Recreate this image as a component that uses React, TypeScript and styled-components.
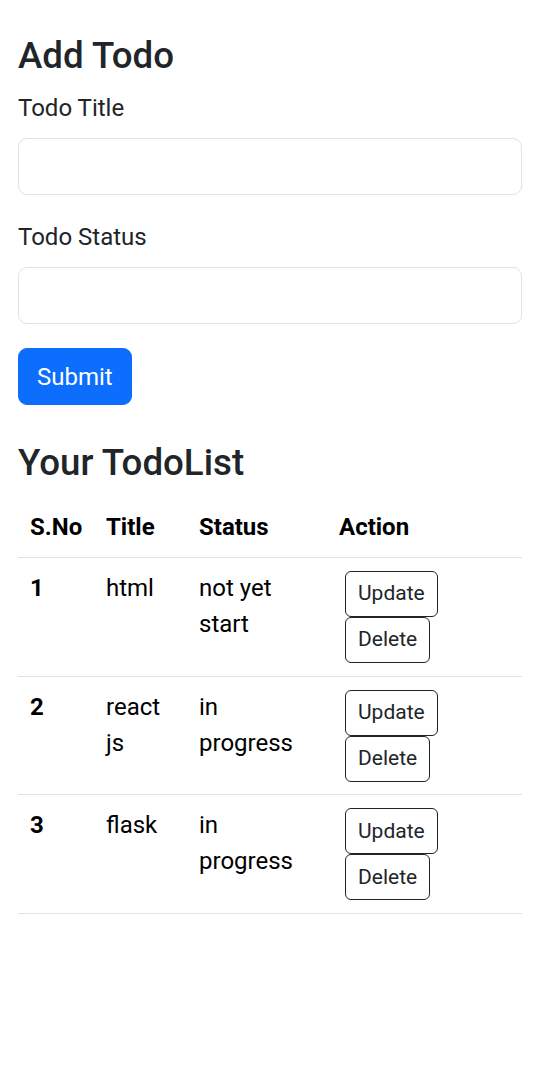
import React from "react";
import styled, { createGlobalStyle } from "styled-components";

const Global = createGlobalStyle`
  * { box-sizing: border-box; }
  body {
    margin: 0;
    background: #fff;
    font-family: Roboto, "Liberation Sans", Arial, sans-serif;
    color: #212529;
    font-size: 24px;
    line-height: 1.5;
  }
`;

const Page = styled.div`
  padding: 34px 18px 0;
`;

const Heading = styled.h2<{ $top?: number }>`
  font-size: 36.7px;
  font-weight: 500;
  line-height: 1.2;
  margin: ${(p) => p.$top ?? 0}px 0 12px;
  color: #212529;
`;

const Field = styled.div`
  margin-bottom: 24px;
`;

const Label = styled.label`
  display: block;
  font-size: 24px;
  line-height: 36px;
  margin-bottom: 12px;
`;

const Input = styled.input`
  display: block;
  width: 100%;
  height: 57px;
  padding: 9px 18px;
  font-size: 24px;
  font-family: inherit;
  border: 1.5px solid #dee2e6;
  border-radius: 9px;
  background: #fff;
  outline: none;
`;

const SubmitButton = styled.button`
  display: inline-block;
  height: 57px;
  padding: 9px 18px;
  font-family: inherit;
  font-size: 24px;
  line-height: 36px;
  color: #fff;
  background: #0d6efd;
  border: 1.5px solid #0d6efd;
  border-radius: 9px;
`;

const Table = styled.table`
  width: 100%;
  border-collapse: collapse;
  table-layout: fixed;
  color: #000;
  vertical-align: top;
`;

const Row = styled.tr`
  border-bottom: 1.5px solid #dee2e6;
`;

const Th = styled.th`
  text-align: left;
  font-weight: 700;
  padding: 12px;
  line-height: 36px;
  vertical-align: top;
`;

const Td = styled.td<{ $bold?: boolean }>`
  padding: 12px;
  line-height: 36px;
  vertical-align: top;
  font-weight: ${(p) => (p.$bold ? 700 : 400)};
`;

const Actions = styled.div`
  display: flex;
  flex-wrap: wrap;
  align-items: flex-start;
  padding: 1px 0 0.7px;
`;

const SmallButton = styled.button`
  display: inline-block;
  margin: 0 6px;
  height: 46px;
  padding: 6px 12px;
  font-family: inherit;
  font-size: 21px;
  line-height: 31.5px;
  color: #212529;
  background: #fff;
  border: 1.5px solid #212529;
  border-radius: 6px;
`;

const todos = [
  { id: 1, title: "html", status: "not yet start" },
  { id: 2, title: "react js", status: "in progress" },
  { id: 3, title: "flask", status: "in progress" },
];

export default function App() {
  return (
    <>
      <Global />
      <Page>
        <Heading>Add Todo</Heading>
        <Field>
          <Label>Todo Title</Label>
          <Input type="text" />
        </Field>
        <Field>
          <Label>Todo Status</Label>
          <Input type="text" />
        </Field>
        <SubmitButton>Submit</SubmitButton>
        <Heading $top={36}>Your TodoList</Heading>
        <Table>
          <colgroup>
            <col style={{ width: 76 }} />
            <col style={{ width: 93 }} />
            <col style={{ width: 140 }} />
            <col />
          </colgroup>
          <thead>
            <Row>
              <Th>S.No</Th>
              <Th>Title</Th>
              <Th>Status</Th>
              <Th>Action</Th>
            </Row>
          </thead>
          <tbody>
            {todos.map((t) => (
              <Row key={t.id}>
                <Td $bold>{t.id}</Td>
                <Td>{t.title}</Td>
                <Td>{t.status}</Td>
                <Td>
                  <Actions>
                    <SmallButton>Update</SmallButton>
                    <SmallButton>Delete</SmallButton>
                  </Actions>
                </Td>
              </Row>
            ))}
          </tbody>
        </Table>
      </Page>
    </>
  );
}
